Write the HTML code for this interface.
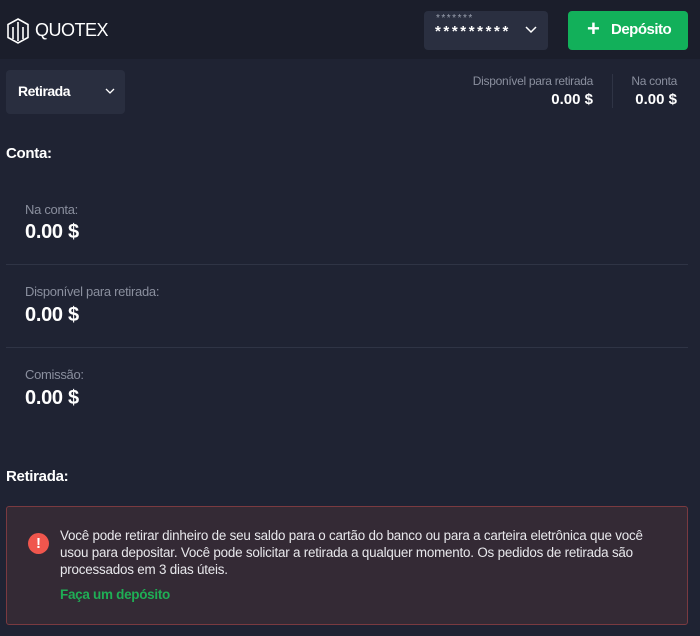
<!DOCTYPE html>
<html><head><meta charset="utf-8"><style>
*{margin:0;padding:0;box-sizing:border-box}
body{width:700px;height:636px;overflow:hidden;background:#1f2333;font-family:"Liberation Sans",sans-serif;color:#fff;position:relative}
.a{position:absolute;white-space:nowrap}
.hdr{position:absolute;left:0;top:0;width:700px;height:59px;background:#1b1e2b}
.g{color:#8a8f9e;font-size:13px;letter-spacing:-0.3px}
.v{font-weight:bold;font-size:20px;letter-spacing:-0.3px}
.line{position:absolute;left:6px;width:682px;height:1px;background:#2f3445}
</style></head><body>
<div class="hdr"></div>
<svg class="a" style="left:6px;top:18px" width="24" height="26" viewBox="0 0 24 26" fill="none" stroke="#fff" stroke-width="1.6"><path d="M12 1 L22 6.5 V19.5 L12 25 L2 19.5 V6.5 Z"/><path d="M7 21V9M12 23V4M17 21V9"/></svg>
<div class="a" style="left:35px;top:20px;font-size:18px;letter-spacing:-0.5px">QUOTEX</div>
<div class="a" style="left:424px;top:11px;width:124px;height:39px;background:#2a2f40;border-radius:4px"></div>
<div class="a" style="left:436px;top:13px;font-size:10px;color:#9aa0ae;letter-spacing:1.5px">*******</div>
<div class="a" style="left:435px;top:23px;font-size:15px;font-weight:bold;letter-spacing:2.6px">*********</div>
<svg class="a" style="left:525px;top:26px" width="12" height="8" viewBox="0 0 12 8"><path d="M1 1l5 5 5-5" stroke="#fff" stroke-width="1.5" fill="none"/></svg>
<div class="a" style="left:568px;top:11px;width:120px;height:39px;background:#12b05a;border-radius:4px"></div>
<div class="a" style="left:587px;top:18px;font-size:22px;font-weight:bold;line-height:22px">+</div>
<div class="a" style="left:611px;top:21px;font-size:15px;font-weight:bold;letter-spacing:-0.5px">Depósito</div>

<div class="a" style="left:6px;top:70px;width:119px;height:44px;background:#292e3f;border-radius:4px"></div>
<div class="a" style="left:18px;top:83px;font-size:14px;font-weight:bold;letter-spacing:-0.5px">Retirada</div>
<svg class="a" style="left:105px;top:88px" width="10" height="7" viewBox="0 0 10 7"><path d="M1 1l4 4 4-4" stroke="#fff" stroke-width="1.3" fill="none"/></svg>
<div class="a g" style="right:107px;top:74px;font-size:12px">Disponível para retirada</div>
<div class="a" style="right:107px;top:91px;font-size:15px;font-weight:bold">0.00 $</div>
<div class="a" style="left:612px;top:74px;width:1px;height:34px;background:#2f3445"></div>
<div class="a g" style="right:23px;top:74px;font-size:12px">Na conta</div>
<div class="a" style="right:23px;top:91px;font-size:15px;font-weight:bold">0.00 $</div>

<div class="a" style="left:6px;top:145px;font-size:15px;font-weight:bold;letter-spacing:-0.3px">Conta:</div>
<div class="a g" style="left:25px;top:202px">Na conta:</div>
<div class="a v" style="left:25px;top:221px">0.00 $</div>
<div class="line" style="top:264px"></div>
<div class="a g" style="left:25px;top:284px">Disponível para retirada:</div>
<div class="a v" style="left:25px;top:304px">0.00 $</div>
<div class="line" style="top:347px"></div>
<div class="a g" style="left:25px;top:367px">Comissão:</div>
<div class="a v" style="left:25px;top:387px">0.00 $</div>

<div class="a" style="left:6px;top:468px;font-size:15px;font-weight:bold;letter-spacing:-0.3px">Retirada:</div>
<div class="a" style="left:6px;top:506px;width:682px;height:119px;background:#342a35;border:1px solid #7a3a40;border-radius:3px"></div>
<div class="a" style="left:28px;top:533px;width:21px;height:21px;border-radius:50%;background:#f0564d;color:#fff;font-weight:bold;font-size:15px;text-align:center;line-height:21px">!</div>
<div class="a" style="left:60px;top:527px;font-size:13.4px;line-height:17px;letter-spacing:-0.2px;color:#e8e8ec;white-space:normal;width:600px">Você pode retirar dinheiro de seu saldo para o cartão do banco ou para a carteira eletrônica que você usou para depositar. Você pode solicitar a retirada a qualquer momento. Os pedidos de retirada são processados em 3 dias úteis.</div>
<div class="a" style="left:60px;top:587px;font-size:13.5px;font-weight:bold;color:#1fae55;letter-spacing:-0.3px">Faça um depósito</div>
</body></html>
